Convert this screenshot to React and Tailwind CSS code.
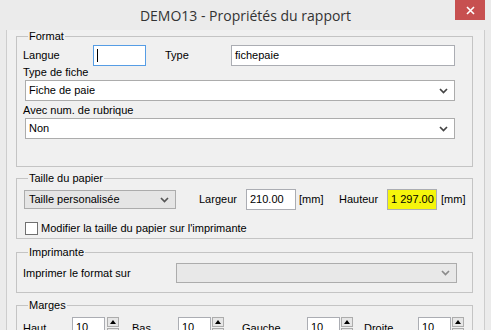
import React from "react";

function Chevron({ color = "#444" }) {
  return (
    <svg width="9" height="6" viewBox="0 0 9 6" className="shrink-0">
      <path d="M1 1 L4.5 4.5 L8 1" stroke={color} strokeWidth="1.7" fill="none" />
    </svg>
  );
}

function Select({ text, className }) {
  return (
    <div className={"flex items-center justify-between border border-[#acacac] bg-white pl-[3px] pr-[6px] " + className}>
      <span>{text}</span>
      <Chevron />
    </div>
  );
}

function Spinner() {
  return (
    <div className="flex flex-col gap-[1px]">
      <div className="w-[12px] h-[10px] border border-[#acacac] bg-[#e6e6e6] flex items-center justify-center">
        <svg width="6" height="4" viewBox="0 0 6 4"><path d="M0 4 L3 0 L6 4 Z" fill="#000" /></svg>
      </div>
      <div className="w-[12px] h-[10px] border border-[#acacac] bg-[#e6e6e6] flex items-center justify-center">
        <svg width="6" height="4" viewBox="0 0 6 4"><path d="M0 0 L3 4 L6 0 Z" fill="#000" /></svg>
      </div>
    </div>
  );
}

function NumInput({ value }) {
  return (
    <div className="w-[33px] h-[21px] border border-[#abadb3] bg-white pl-[3px] flex items-center">{value}</div>
  );
}

export default function App() {
  return (
    <div className="w-[491px] h-[330px] overflow-hidden bg-[#ebebeb] flex flex-col font-['Liberation_Sans',Arial,sans-serif] text-[11px] leading-[13px] text-black whitespace-nowrap">
      {/* Title bar */}
      <div className="relative h-[30px] shrink-0 flex items-center justify-center">
        <span className="font-['Open_Sans',sans-serif] text-[14px] leading-[20px] text-[#333] pt-[1px]">DEMO13 - Propriétés du rapport</span>
        <div className="absolute left-[455px] top-0 w-[30px] h-[20px] bg-[#c75050] flex items-center justify-center">
          <svg width="9" height="9" viewBox="0 0 9 9"><path d="M1 1 L8 8 M8 1 L1 8" stroke="#fff" strokeWidth="1.6" /></svg>
        </div>
      </div>
      {/* Body */}
      <div className="flex flex-1 min-h-0">
        <div className="w-[6px] shrink-0" />
        <div className="flex-1 border-l border-r border-[#cdcdcd] bg-[#f0f0f0] pl-[9px] pr-[11px] flex flex-col">
          {/* Format */}
          <fieldset className="border border-[#c4c4c4] px-[6px] pb-[27px]">
            <legend className="ml-[5px] px-[1px] leading-[13px]">Format</legend>
            <div className="flex items-center h-[21px] mt-[2px]">
              <span className="w-[70px]">Langue</span>
              <div className="w-[53px] h-[21px] border border-[#569de5] bg-white flex items-center pl-[3px]">
                <div className="w-[1px] h-[13px] bg-black" />
              </div>
              <span className="ml-[19px] w-[66px]">Type</span>
              <div className="w-[224px] h-[21px] border border-[#abadb3] bg-white flex items-center pl-[3px]">fichepaie</div>
            </div>
            <div className="mt-[0px]">Type de fiche</div>
            <Select text="Fiche de paie" className="ml-[2px] mt-[1px] w-[430px] h-[21px]" />
            <div className="mt-[3px]">Avec num. de rubrique</div>
            <Select text="Non" className="ml-[2px] mt-[1px] w-[430px] h-[21px]" />
          </fieldset>

          {/* Taille du papier */}
          <fieldset className="mt-[5px] border border-[#c4c4c4] px-[6px] pb-[3px]">
            <legend className="ml-[5px] px-[1px] leading-[13px]">Taille du papier</legend>
            <div className="flex items-center h-[21px] mt-[4px]">
              <div className="ml-[1px] w-[152px] h-[19px] border border-[#acacac] bg-[#e5e5e5] flex items-center justify-between pl-[4px] pr-[6px]">
                <span>Taille personalisée</span>
                <Chevron color="#555" />
              </div>
              <span className="ml-[23px] w-[47px]">Largeur</span>
              <div className="w-[50px] h-[21px] border border-[#abadb3] bg-white flex items-center pl-[3px]">210.00</div>
              <span className="ml-[3px] w-[40px]">[mm]</span>
              <span className="w-[48px]">Hauteur</span>
              <div className="w-[50px] h-[21px] border border-[#abadb3] bg-[#f5f50c] flex items-center pl-[3px]">1 297.00</div>
              <span className="ml-[4px]">[mm]</span>
            </div>
            <div className="flex items-center mt-[12px] h-[13px]">
              <div className="ml-[2px] w-[13px] h-[13px] border border-[#707070] bg-white" />
              <span className="ml-[3px]">Modifier la taille du papier sur l'imprimante</span>
            </div>
          </fieldset>

          {/* Imprimante */}
          <fieldset className="mt-[7px] border border-[#c4c4c4] px-[6px] pb-[9px]">
            <legend className="ml-[5px] px-[1px] leading-[13px]">Imprimante</legend>
            <div className="flex items-center h-[20px] mt-[4px]">
              <span className="w-[153px]">Imprimer le format sur</span>
              <div className="w-[281px] h-[20px] border border-[#acacac] bg-[#e8e8e8] flex items-center justify-end pr-[6px]">
                <Chevron color="#8a8a8a" />
              </div>
            </div>
          </fieldset>

          {/* Marges */}
          <fieldset className="mt-[6px] border border-[#c4c4c4] px-[6px] pb-[9px]">
            <legend className="ml-[5px] px-[1px] leading-[13px]">Marges</legend>
            <div className="flex items-start mt-[5px]">
              <span className="w-[49px] mt-[5px]">Haut</span>
              <NumInput value="10" />
              <div className="ml-[2px]"><Spinner /></div>
              <span className="ml-[13px] w-[46px] mt-[5px]">Bas</span>
              <NumInput value="10" />
              <div className="ml-[1px]"><Spinner /></div>
              <span className="ml-[18px] w-[65px] mt-[5px]">Gauche</span>
              <NumInput value="10" />
              <div className="ml-[1px]"><Spinner /></div>
              <span className="ml-[11px] w-[54px] mt-[5px]">Droite</span>
              <NumInput value="10" />
              <div className="ml-[1px]"><Spinner /></div>
            </div>
          </fieldset>
        </div>
        <div className="w-[6px] shrink-0" />
      </div>
    </div>
  );
}
